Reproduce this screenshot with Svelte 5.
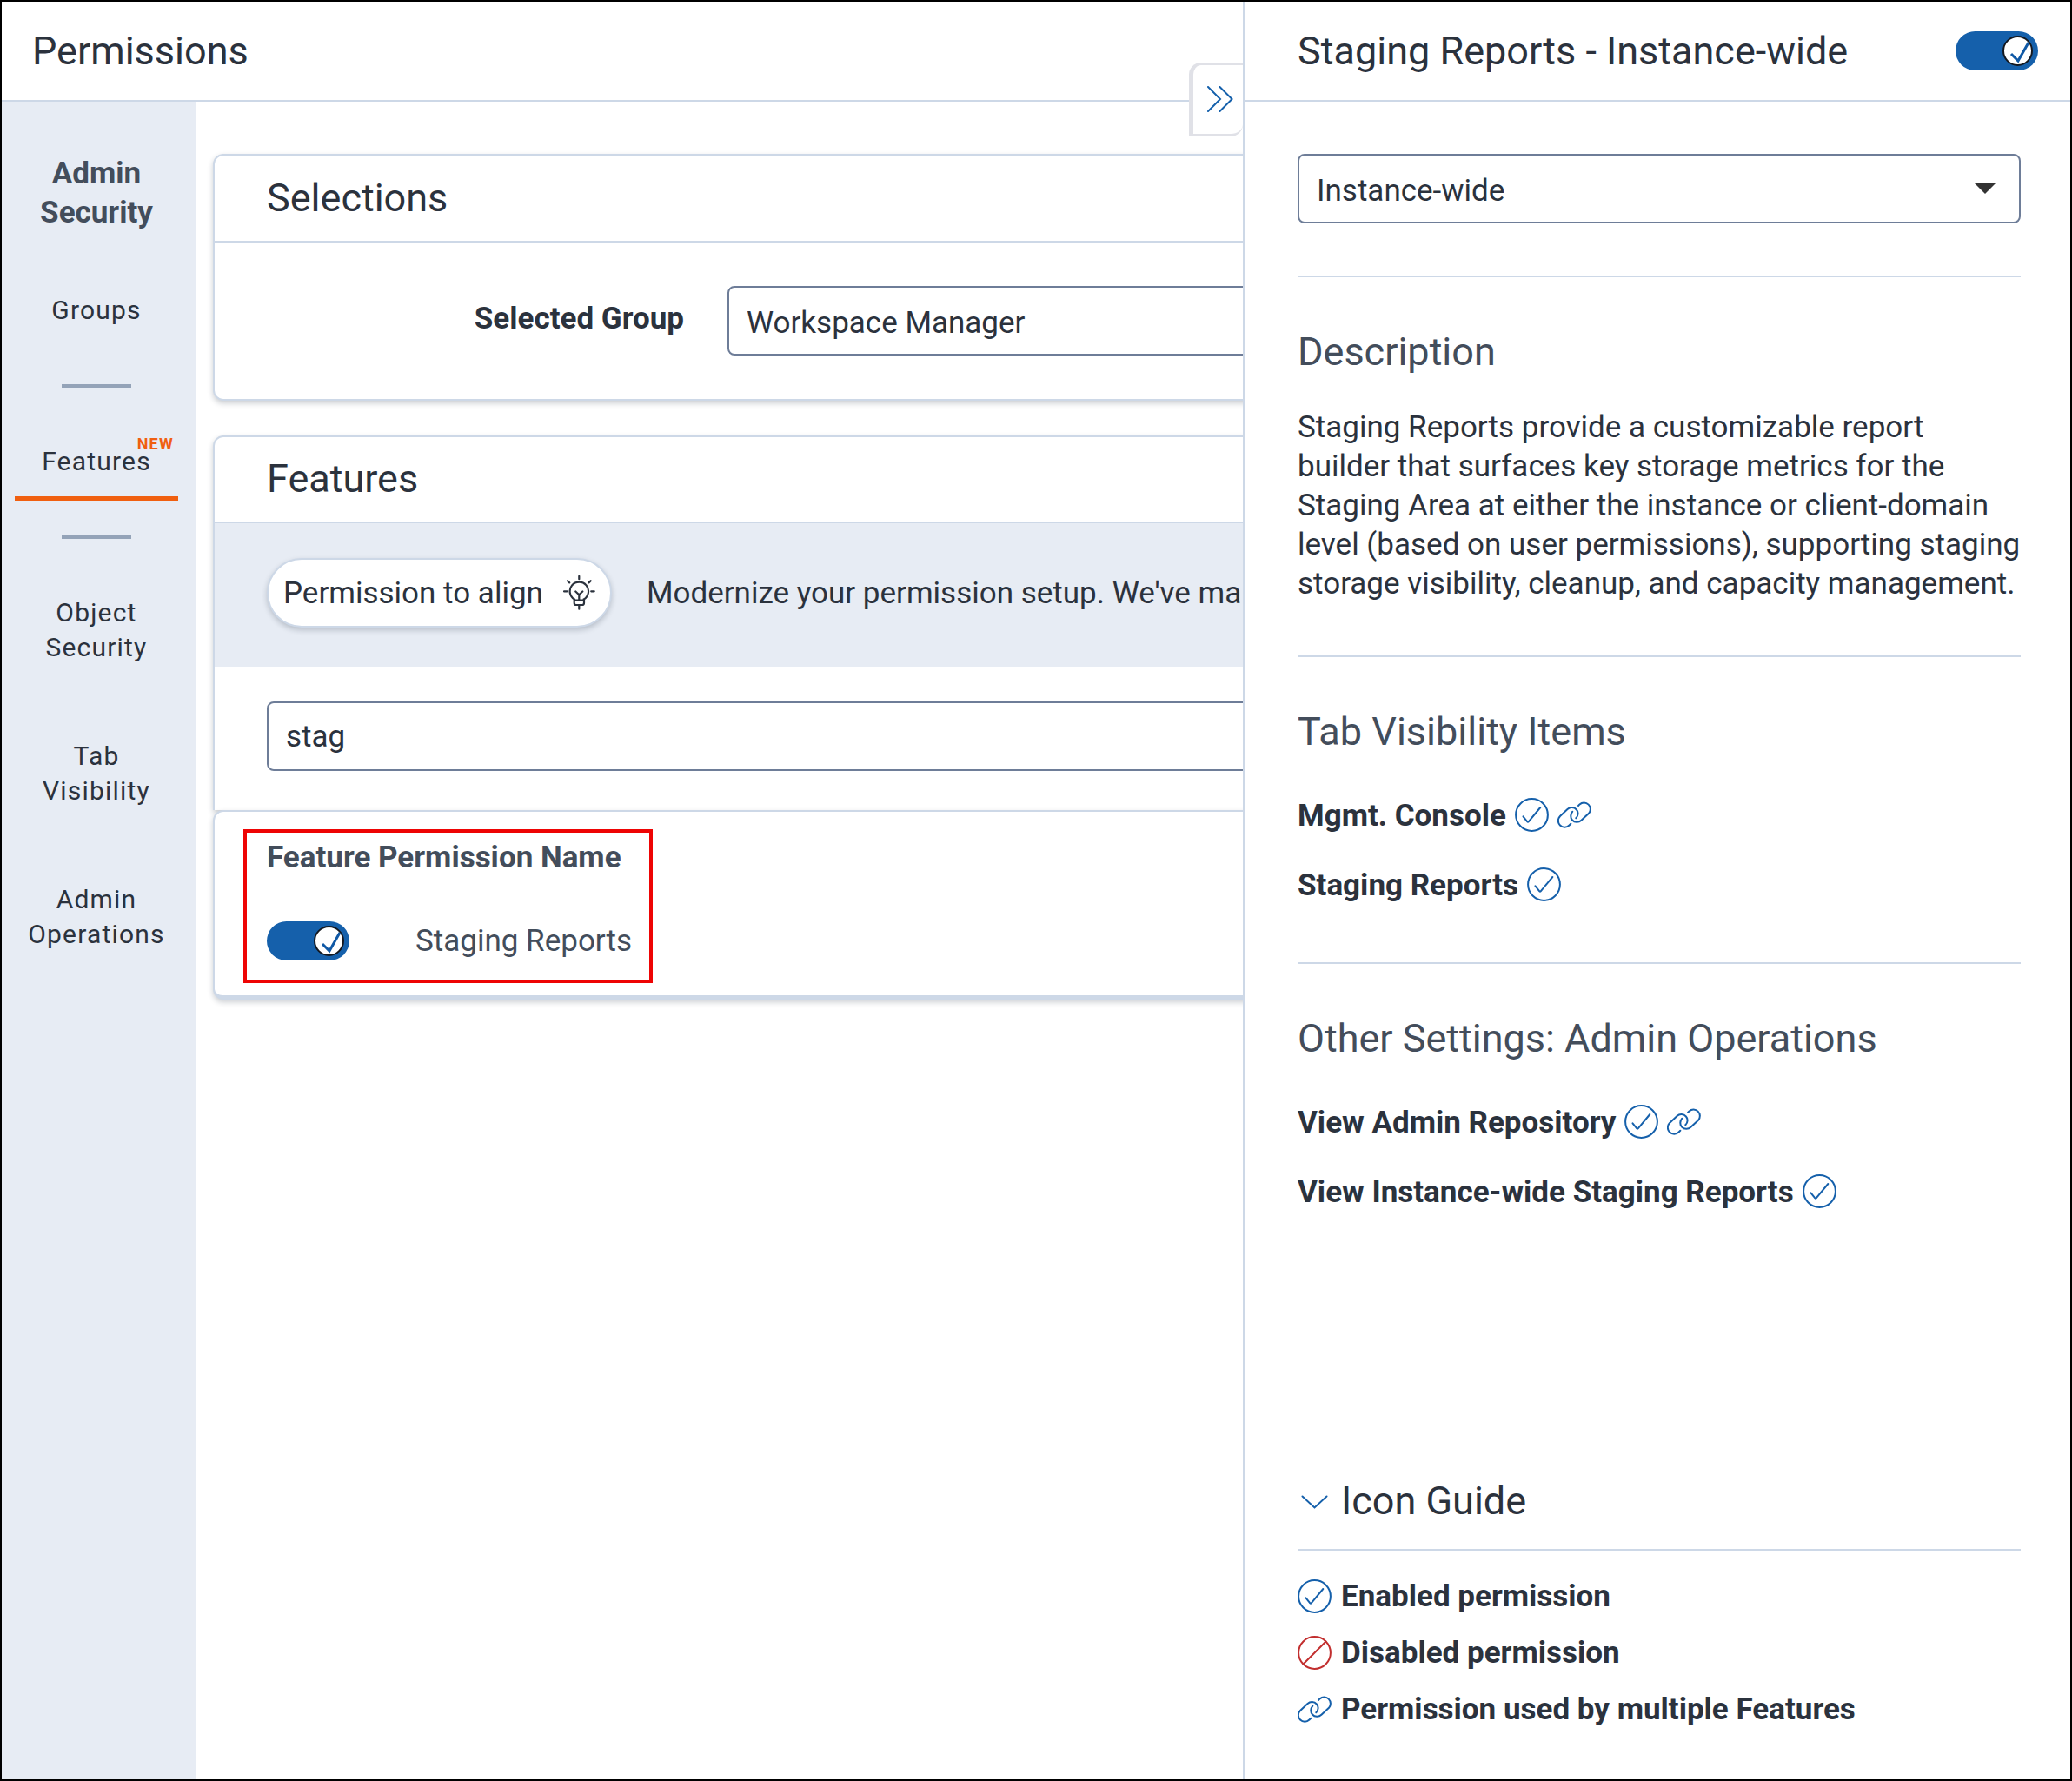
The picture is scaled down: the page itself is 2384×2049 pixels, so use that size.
<script lang="ts">
	let scope = $state('Instance-wide');
	let group = $state('Workspace Manager');
	let search = $state('stag');
	let enabled = $state(true);
	let guideOpen = $state(true);

	const visibilityItems = [
		{ name: 'Mgmt. Console', shared: true },
		{ name: 'Staging Reports', shared: false }
	];

	const adminOperations = [
		{ name: 'View Admin Repository', shared: true },
		{ name: 'View Instance-wide Staging Reports', shared: false }
	];
</script>

{#snippet checkIcon()}
	<svg class="icon" viewBox="0 0 39 39" aria-hidden="true">
		<circle cx="19.5" cy="19.5" r="18.4" />
		<path d="M9.5 21.3l4.8 6q.7.8 1.4 0L29.3 11" />
	</svg>
{/snippet}

{#snippet linkIcon()}
	<svg class="icon" viewBox="0 0 39 39" aria-hidden="true">
		<path
			d="M15.3 29.7l-1.8 1.8a7.4 7.4 0 0 1-10.5-10.5l8.5-8a7.4 7.4 0 0 1 10.4.5c2.4 2.6 2.3 6.8-.6 9.8"
		/>
		<path
			d="M24 9l1.5-1.6a7.4 7.4 0 0 1 10.5 10.4l-8.6 8a7.4 7.4 0 0 1-10.4-.3c-2.4-2.6-2.3-6.8.3-9.8"
		/>
	</svg>
{/snippet}

{#snippet blockedIcon()}
	<svg class="icon danger" viewBox="0 0 39 39" aria-hidden="true">
		<circle cx="19.5" cy="19.5" r="18.4" />
		<path d="M6.5 32.5l26-26" />
	</svg>
{/snippet}

{#snippet toggle(label)}
	<label class="toggle">
		<input type="checkbox" aria-label={label} bind:checked={enabled} />
		<svg viewBox="0 0 95 45" aria-hidden="true">
			<rect width="95" height="45" rx="22.5" fill={enabled ? '#1560ab' : '#94a3b8'} />
			<g transform={enabled ? '' : 'translate(-50 0)'}>
				<circle cx="71.5" cy="22.5" r="16.5" fill="#fff" stroke="#14181f" stroke-width="2" />
				{#if enabled}
					<path d="M64 26l8 8 12-21" fill="none" stroke="#0f58a5" stroke-width="3" />
				{/if}
			</g>
		</svg>
	</label>
{/snippet}

{#snippet permissionList(items)}
	<ul class="permissions">
		{#each items as item}
			<li>
				<strong>{item.name}</strong>
				{@render checkIcon()}
				{#if item.shared}
					{@render linkIcon()}
				{/if}
			</li>
		{/each}
	</ul>
{/snippet}

<div class="app">
	<div class="workspace">
		<header class="bar">
			<h1>Permissions</h1>
		</header>

		<div class="body">
			<nav class="sidebar">
				<h2>Admin Security</h2>
				<a href="#groups">Groups</a>
				<hr />
				<a href="#features" class="active" aria-current="page">
					<span class="tagged">Features<sup>NEW</sup></span>
				</a>
				<hr />
				<a href="#object-security">Object Security</a>
				<a href="#tab-visibility">Tab Visibility</a>
				<a href="#admin-operations">Admin Operations</a>
			</nav>

			<main>
				<section class="card">
					<h2>Selections</h2>
					<div class="group-row">
						<label for="group">Selected Group</label>
						<select id="group" bind:value={group}>
							<option>Workspace Manager</option>
						</select>
					</div>
				</section>

				<section class="card features">
					<h2>Features</h2>
					<div class="notice">
						<button class="pill">
							Permission to align
							<svg viewBox="0 0 37 40" aria-hidden="true">
								<path
									d="M13 28.7v-1.2a10.7 10.7 0 1 1 10.7 0v1.2M12.7 28.7h11.3v3q0 2.3-2.3 2.3h-6.7q-2.3 0-2.3-2.3zM18.3 34v4.7M18.3 28.7v-6.5M14.3 18.5l4 3.7 4-3.7M18.3 1v3.2M1 18.3h3.5M32.2 18.3h3.5M5 6.2l2.2 2.2M31.7 6.2l-2.2 2.2"
								/>
							</svg>
						</button>
						<p>Modernize your permission setup. We've marked</p>
					</div>
					<div class="search">
						<input type="text" aria-label="Search features" bind:value={search} />
					</div>
				</section>

				<section class="card results">
					<div class="highlight">
						<table>
							<thead>
								<tr><th colspan="2">Feature Permission Name</th></tr>
							</thead>
							<tbody>
								<tr>
									<td>{@render toggle('Enable Staging Reports')}</td>
									<td class="name">Staging Reports</td>
								</tr>
							</tbody>
						</table>
					</div>
				</section>
			</main>
		</div>
	</div>

	<aside>
		<button class="collapse" aria-label="Collapse panel">
			<svg viewBox="0 0 30 30" aria-hidden="true">
				<path d="M1 1l14 14L1 29M14.5 1l14 14-14 14" />
			</svg>
		</button>

		<header class="bar">
			<h2>Staging Reports - Instance-wide</h2>
			{@render toggle('Staging Reports - Instance-wide')}
		</header>

		<div class="details">
			<div class="scope">
				<select aria-label="Scope" bind:value={scope}>
					<option>Instance-wide</option>
				</select>
				<svg viewBox="0 0 24 12" aria-hidden="true"><path d="M0 0h24L12 12z" /></svg>
			</div>

			<section>
				<h3>Description</h3>
				<p>
					Staging Reports provide a customizable report builder that surfaces key storage metrics for
					the Staging Area at either the instance or client-domain level (based on user permissions),
					supporting staging storage visibility, cleanup, and capacity management.
				</p>
			</section>

			<section>
				<h3>Tab Visibility Items</h3>
				{@render permissionList(visibilityItems)}
			</section>

			<section>
				<h3>Other Settings: Admin Operations</h3>
				{@render permissionList(adminOperations)}
			</section>

			<div class="guide">
				<button
					class="guide-title"
					aria-expanded={guideOpen}
					onclick={() => (guideOpen = !guideOpen)}
				>
					<svg class="icon" viewBox="0 0 39 39" aria-hidden="true">
						<path d="M5.5 13.5l14 13 14-13" />
					</svg>
					Icon Guide
				</button>
				{#if guideOpen}
					<ul>
						<li>{@render checkIcon()}<strong>Enabled permission</strong></li>
						<li>{@render blockedIcon()}<strong>Disabled permission</strong></li>
						<li>{@render linkIcon()}<strong>Permission used by multiple Features</strong></li>
					</ul>
				{/if}
			</div>
		</div>
	</aside>
</div>

<style>
	:global(body) {
		margin: 0;
	}

	.app {
		--ink: #2b323d;
		--ink-soft: #434d5b;
		--line: #cdd8e7;
		--field: #6e7d98;
		--tint: #e7ecf4;
		--blue: #1560ab;
		display: flex;
		box-sizing: border-box;
		min-height: 100vh;
		border: 2px solid #000;
		background: #fff;
		color: var(--ink);
		font-family: Roboto, sans-serif;
		font-size: 35px;
		line-height: 45px;
	}

	h1,
	h2,
	h3,
	p,
	ul {
		margin: 0;
		padding: 0;
		list-style: none;
	}

	h1,
	h2,
	h3 {
		font-size: 45px;
		font-weight: 400;
		line-height: 60px;
	}

	button,
	select,
	input {
		color: inherit;
		font: inherit;
	}

	strong {
		font-weight: 700;
	}

	.bar {
		display: flex;
		align-items: center;
		justify-content: space-between;
		box-sizing: border-box;
		height: 115px;
		padding: 0 37px 0 35px;
		border-bottom: 2px solid var(--line);
	}

	.workspace {
		display: flex;
		flex: 1;
		flex-direction: column;
		min-width: 0;
		overflow: hidden;
	}

	.body {
		display: flex;
		flex: 1;
	}

	/* left navigation */
	.sidebar {
		display: flex;
		flex-direction: column;
		flex: none;
		box-sizing: border-box;
		width: 223px;
		padding: 60px 20px 0 15px;
		background: var(--tint);
		text-align: center;
	}

	.sidebar h2 {
		margin-bottom: 28px;
		color: var(--ink-soft);
		font-size: 35px;
		font-weight: 700;
		line-height: 45px;
	}

	.sidebar a {
		padding: 42px 12px 43px;
		color: inherit;
		font-size: 30px;
		letter-spacing: 0.04em;
		line-height: 40px;
		text-decoration: none;
	}

	.sidebar a.active {
		padding: 65px 12px 20px;
		border-bottom: 5px solid #f05f10;
	}

	.sidebar hr {
		width: 80px;
		height: 4px;
		margin: 22px auto 0;
		border: 0;
		background: #94a3b8;
	}

	.sidebar .active + hr {
		margin: 40px auto 23px;
	}

	.tagged {
		position: relative;
	}

	sup {
		position: absolute;
		right: -26px;
		top: -12px;
		color: #f05f10;
		font-size: 18px;
		font-weight: 700;
		line-height: 20px;
	}

	/* cards run on underneath the side panel */
	main {
		flex: 1;
		min-width: 0;
		margin-right: -120px;
		padding: 60px 0 0 20px;
	}

	.card {
		box-sizing: border-box;
		margin-bottom: 40px;
		border: 2px solid var(--line);
		border-radius: 12px;
		background: #fff;
		box-shadow: 0 3px 6px rgb(20 30 50 / 22%);
	}

	.card h2 {
		padding: 19px 60px;
		border-bottom: 2px solid var(--line);
	}

	.group-row {
		display: grid;
		grid-template-columns: 480px 1fr;
		gap: 50px;
		padding: 50px 60px;
	}

	.group-row label {
		padding-top: 15px;
		font-weight: 700;
		text-align: right;
	}

	select,
	input[type='text'] {
		box-sizing: border-box;
		width: 100%;
		height: 80px;
		padding: 0 20px;
		border: 2px solid var(--field);
		border-radius: 8px;
		background: #fff;
		appearance: none;
	}

	select {
		padding-top: 4px;
	}

	.card.features {
		margin-bottom: 0;
		border-bottom: 0;
		border-radius: 12px 12px 0 0;
	}

	.features h2 {
		padding-top: 18px;
	}

	.notice {
		display: flex;
		align-items: center;
		gap: 40px;
		padding: 40px 60px 45px;
		background: var(--tint);
		white-space: nowrap;
	}

	.pill {
		display: flex;
		align-items: center;
		gap: 23px;
		box-sizing: border-box;
		height: 80px;
		padding: 0 17px;
		border: 2px solid var(--line);
		border-radius: 40px;
		background: #fff;
		box-shadow: 0 3px 6px rgb(20 30 50 / 22%);
	}

	.pill svg {
		width: 37px;
		height: 40px;
		fill: none;
		stroke: currentColor;
		stroke-linecap: round;
		stroke-width: 2.2;
	}

	.search {
		padding: 40px 60px 45px;
	}

	.results {
		padding: 20px 33px 14px;
		border-bottom-width: 5px;
	}

	.highlight {
		width: fit-content;
		padding: 0 20px 0 23px;
		border: 4px solid #ee0404;
	}

	table {
		border-collapse: collapse;
		color: var(--ink-soft);
	}

	th {
		padding: 6px 0 5px;
		font-weight: 700;
		text-align: left;
	}

	td {
		padding: 46px 0 22px;
	}

	td.name {
		padding-left: 76px;
	}

	.toggle {
		display: block;
		position: relative;
		width: 95px;
		height: 45px;
	}

	.toggle input {
		position: absolute;
		inset: 0;
		width: 100%;
		height: 100%;
		margin: 0;
		opacity: 0;
	}

	.toggle svg {
		display: block;
		width: 95px;
		height: 45px;
	}

	/* right panel */
	aside {
		display: flex;
		position: relative;
		flex-direction: column;
		box-sizing: border-box;
		width: 40%;
		border-left: 2px solid var(--line);
		background: #fff;
	}

	aside .bar {
		padding-left: 61px;
	}

	.collapse {
		position: absolute;
		right: 100%;
		top: 70px;
		box-sizing: border-box;
		width: 62px;
		height: 85px;
		margin-right: 2px;
		padding: 0 0 2px 4px;
		border: solid #e0e1e7;
		border-width: 3px 0 3px 5px;
		border-radius: 14px 0 14px 0;
		background: #fff;
	}

	.collapse svg {
		display: block;
		width: 30px;
		height: 30px;
		margin: 0 auto;
		fill: none;
		stroke: var(--blue);
		stroke-linecap: round;
		stroke-width: 2;
	}

	.details {
		display: flex;
		flex: 1;
		flex-direction: column;
		padding: 60px 57px 48px 61px;
	}

	.scope {
		display: flex;
		position: relative;
		margin-bottom: 60px;
	}

	.scope svg {
		position: absolute;
		right: 29px;
		top: 34px;
		width: 24px;
		height: 12px;
		fill: #333;
		pointer-events: none;
	}

	.details section {
		padding: 56px 0 60px;
		border-top: 2px solid var(--line);
	}

	.details section:last-of-type {
		padding-bottom: 0;
	}

	h3 {
		margin-bottom: 34px;
		color: var(--ink-soft);
	}

	.permissions {
		padding: 10px 0 6px;
	}

	.permissions li {
		display: flex;
		align-items: center;
		gap: 10px;
		height: 45px;
	}

	.permissions li + li {
		margin-top: 35px;
	}

	.icon {
		flex: none;
		width: 39px;
		height: 39px;
		fill: none;
		stroke: var(--blue);
		stroke-width: 2;
		stroke-linecap: round;
	}

	.permissions .icon {
		margin-bottom: 3px;
	}

	.icon.danger {
		stroke: #c22f2f;
	}

	.guide {
		margin-top: auto;
	}

	.guide-title {
		display: flex;
		align-items: center;
		gap: 11px;
		width: 100%;
		padding: 0 0 25px;
		border: 0;
		border-bottom: 2px solid var(--line);
		background: none;
		font-size: 45px;
		line-height: 60px;
	}

	.guide ul {
		padding-top: 20px;
	}

	.guide li {
		display: flex;
		align-items: center;
		gap: 11px;
		height: 65px;
	}
</style>
